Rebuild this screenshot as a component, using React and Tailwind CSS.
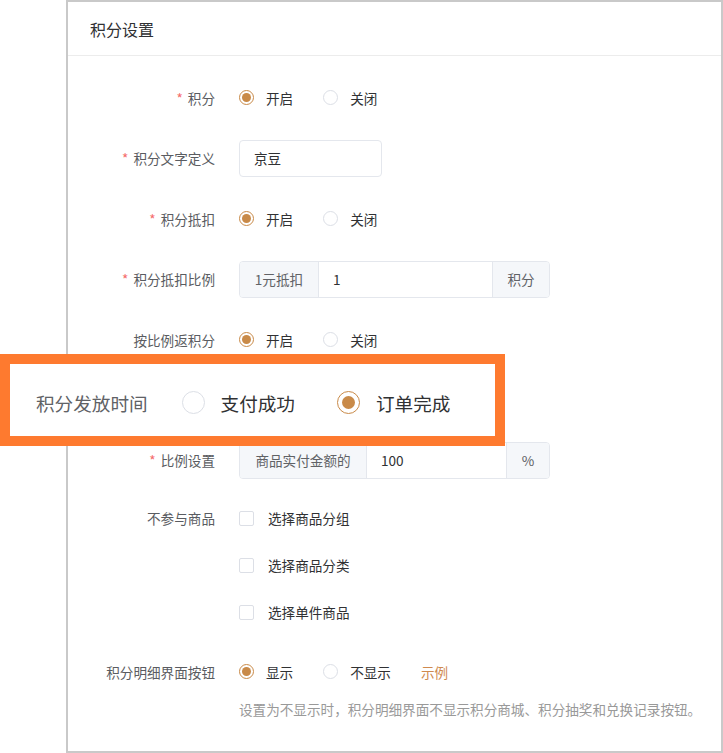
import React from 'react';

const FONT = { fontFamily: '"Noto Sans CJK SC", "Noto Sans", sans-serif' };

// ── Radio ──────────────────────────────────────────────────────────────────────
const Radio = ({ checked, big = false }) => (
  <span
    className={`flex items-center justify-center rounded-full border bg-white flex-shrink-0 ${
      big ? 'w-[23px] h-[23px] border-[1.5px]' : 'w-[15px] h-[15px]'
    } ${checked ? 'border-[#c98a48]' : 'border-[#dcdfe6]'}`}
  >
    {checked && (
      <span className={`rounded-full bg-[#c98a48] ${big ? 'w-[13px] h-[13px]' : 'w-[9px] h-[9px]'}`} />
    )}
  </span>
);

const RadioGroup = ({ options, value, extra }) => (
  <div className="flex items-center h-9">
    {options.map((o) => (
      <label key={o} className="flex items-center mr-[30px]">
        <Radio checked={o === value} />
        <span className="ml-[12px] text-[#303133]">{o}</span>
      </label>
    ))}
    {extra}
  </div>
);

const Checkbox = ({ label }) => (
  <div className="flex items-center h-9">
    <span className="w-[15px] h-[15px] border border-[#dcdfe6] rounded-[2px] bg-white" />
    <span className="ml-[14px] text-[#303133]">{label}</span>
  </div>
);

// ── Form row ───────────────────────────────────────────────────────────────────
const Row = ({ label, required, children, className = 'mb-6' }) => (
  <div className={`flex items-start ${className}`}>
    <div className="w-[147px] h-9 flex items-center justify-end text-[#5a5c61]">
      {required && <span className="text-[#f56c6c] mr-[5px]">*</span>}
      {label}
    </div>
    <div className="ml-6 min-h-9 flex flex-col">{children}</div>
  </div>
);

const InputGroup = ({ prefix, prefixW, value, inputW, suffix, suffixW }) => (
  <div className="flex h-[37px] border border-[#e4e7ed] rounded-[4px] overflow-hidden">
    <div className={`${prefixW} bg-[#f5f7fa] flex items-center justify-center text-[#606266] border-r border-[#e4e7ed]`}>
      {prefix}
    </div>
    <div className={`${inputW} bg-white flex items-center pl-[14px] text-[#303133]`}>{value}</div>
    <div className={`${suffixW} bg-[#f5f7fa] flex items-center justify-center text-[#606266] border-l border-[#e4e7ed]`}>
      {suffix}
    </div>
  </div>
);

export default function App() {
  return (
    <div className="relative w-[723px] h-[753px] bg-white text-[13.6px]" style={FONT}>
      <div className="ml-[66px] h-full border-2 border-[#c9c9c9] bg-white">
        {/* header */}
        <div className="h-[54px] flex items-center pl-[22px] border-b border-[#ececec] text-[16px] text-[#303133]">
          积分设置
        </div>

        {/* form */}
        <div className="pt-6">
          <Row label="积分" required>
            <RadioGroup options={['开启', '关闭']} value="开启" />
          </Row>
          <Row label="积分文字定义" required>
            <div className="w-[143px] h-[37px] border border-[#e4e7ed] rounded-[4px] flex items-center pl-[14px] text-[#303133]">
              京豆
            </div>
          </Row>
          <Row label="积分抵扣" required>
            <RadioGroup options={['开启', '关闭']} value="开启" />
          </Row>
          <Row label="积分抵扣比例" required>
            <InputGroup prefix="1元抵扣" prefixW="w-[79px]" value="1" inputW="w-[173px]" suffix="积分" suffixW="w-[57px]" />
          </Row>
          <Row label="按比例返积分">
            <RadioGroup options={['开启', '关闭']} value="开启" />
          </Row>
          {/* row hidden beneath the callout */}
          <div className="invisible">
            <Row label="积分发放时间">
              <RadioGroup options={['支付成功', '订单完成']} value="订单完成" />
            </Row>
          </div>
          <Row label="比例设置" required>
            <InputGroup prefix="商品实付金额的" prefixW="w-[127px]" value="100" inputW="w-[139px]" suffix="%" suffixW="w-[43px]" />
          </Row>
          <Row label="不参与商品" className="-mt-[3px] mb-6">
            <div className="flex flex-col gap-[11px]">
              <Checkbox label="选择商品分组" />
              <Checkbox label="选择商品分类" />
              <Checkbox label="选择单件商品" />
            </div>
          </Row>
          <Row label="积分明细界面按钮" className="">
            <RadioGroup
              options={['显示', '不显示']}
              value="显示"
              extra={<span className="text-[#cf8a4f]">示例</span>}
            />
            <div className="mt-[9px] text-[#999999] leading-5">
              设置为不显示时，积分明细界面不显示积分商城、积分抽奖和兑换记录按钮。
            </div>
          </Row>
        </div>
      </div>

      {/* highlighted callout */}
      <div className="absolute left-0 top-[354px] w-[505px] h-[92px] border-[10px] border-[#fe7a2f] bg-white flex items-center pl-[26px] pt-[6px] text-[18.6px]">
        <span className="text-[#606266]">积分发放时间</span>
        <span className="ml-[34px] flex items-center">
          <Radio big />
          <span className="ml-[16px] text-[#303133]">支付成功</span>
        </span>
        <span className="ml-[42px] flex items-center">
          <Radio big checked />
          <span className="ml-[16px] text-[#303133]">订单完成</span>
        </span>
      </div>
    </div>
  );
}
